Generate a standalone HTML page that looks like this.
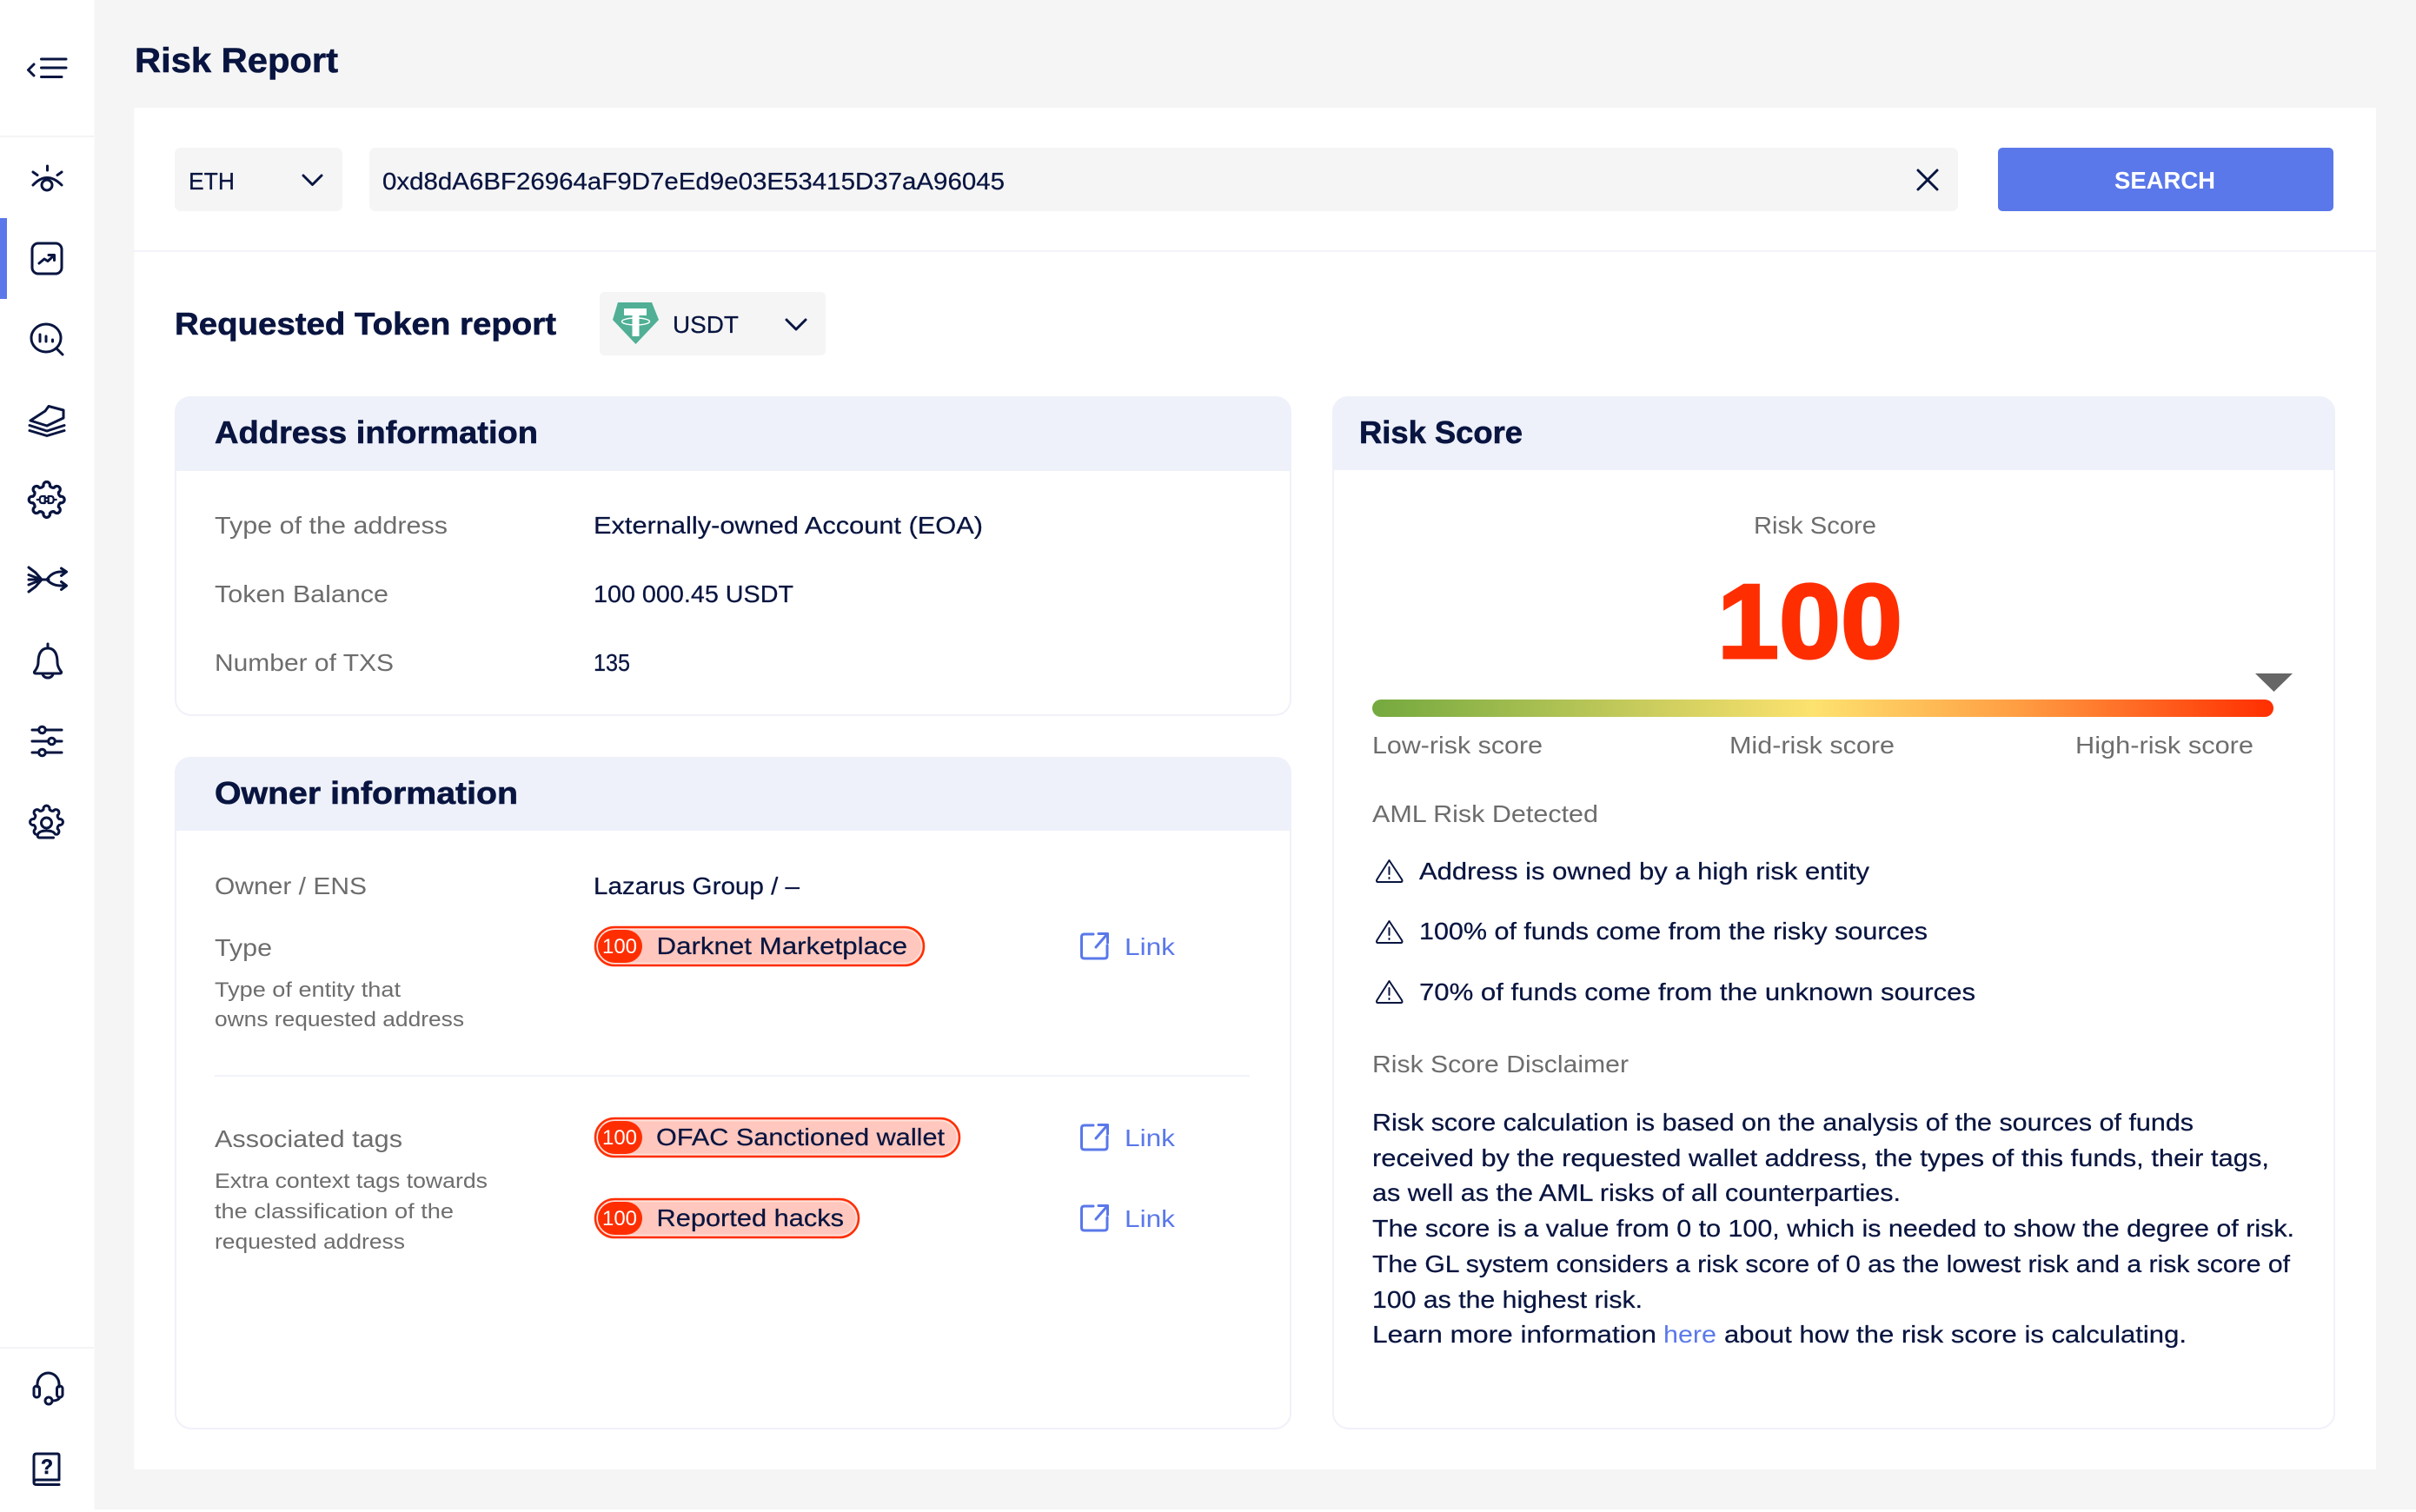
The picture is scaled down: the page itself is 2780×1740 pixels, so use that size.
<!DOCTYPE html>
<html><head><meta charset="utf-8"><title>Risk Report</title>
<style>
html,body{margin:0;padding:0;background:#fff;width:2780px;height:1740px;overflow:hidden}
svg{display:block}
text{font-family:"Liberation Sans",sans-serif;font-size:28px;fill:#091540;stroke:#091540;stroke-width:.25px}
.g{fill:#6d6d6d;stroke:none}
.s{font-size:24px;fill:#6d6d6d;stroke:none}
.b{font-weight:bold;stroke-width:.6px}
.h{font-weight:bold;font-size:36px;stroke-width:.6px}
.l{fill:#5a78ea;stroke:none}
.n{stroke:none}
.i{fill:none;stroke:#091540;stroke-width:3;stroke-linecap:round;stroke-linejoin:round}
.a{fill:none;stroke:#5a78ea;stroke-width:3;stroke-linecap:round;stroke-linejoin:round}
.w{fill:none;stroke:#091540;stroke-width:2;stroke-linecap:round;stroke-linejoin:round}
</style></head><body>
<svg width="2780" height="1740" viewBox="0 0 2780 1740" xmlns="http://www.w3.org/2000/svg">
<defs><linearGradient id="grad" x1="0" x2="1" y1="0" y2="0">
<stop offset="0" stop-color="#74a93f"/><stop offset=".49" stop-color="#fde26f"/><stop offset=".72" stop-color="#ff9c42"/><stop offset="1" stop-color="#ff2e00"/></linearGradient></defs>
<rect width="2780" height="1740" fill="#fff"/>
<rect x="108.500" width="2672" height="1737" fill="#f5f5f5"/>
<rect y="156" width="108" height="2" fill="#f4f4f7"/>
<rect y="1550" width="108" height="2" fill="#f4f4f7"/>
<rect y="251" width="8" height="93" fill="#5a78ea"/>

<!-- sidebar icons -->
<path class="i" stroke-width="3.500" d="M39 74 L32.500 80.500 L39 87 M47.500 68 H76 M47.500 78 H76 M47.500 88.500 H71"/>
<g class="i"><path d="M38 213 Q54 196 71 213"/><circle cx="54" cy="213" r="6"/><path d="M54.500 191 V196 M38 198 L43 201.500 M71 198 L66 201.500"/></g>
<g class="i"><rect x="37" y="280" width="34" height="35" rx="7"/><path d="M45 303 L51 298 L55 300.500 L62 294 M56 293.500 H62.500 V299.500"/></g>
<g class="i"><ellipse cx="53" cy="389" rx="17" ry="16"/><path d="M65 401 L72 408 M46 385 V393 M53 387 V393 M60.500 391 V393"/></g>
<g class="i"><path d="M35 484 L52 473 L56 467.500 L73 472 V481 L54 490 Z M34 489.500 L54 496 L74 489.500 M34 495.500 L54 501.500 L74 495.500"/></g>
<g class="i" transform="translate(53.700 575)"><path transform="scale(1.08)" d="M14.600 -3.400 A3.500 3.500 0 1 1 14.600 3.400 A5 5 0 0 0 12.700 7.900 A3.500 3.500 0 1 1 7.900 12.700 A5 5 0 0 0 3.400 14.600 A3.500 3.500 0 1 1 -3.400 14.600 A5 5 0 0 0 -7.900 12.700 A3.500 3.500 0 1 1 -12.700 7.900 A5 5 0 0 0 -14.600 3.400 A3.500 3.500 0 1 1 -14.600 -3.400 A5 5 0 0 0 -12.700 -7.900 A3.500 3.500 0 1 1 -7.900 -12.700 A5 5 0 0 0 -3.400 -14.600 A3.500 3.500 0 1 1 3.400 -14.600 A5 5 0 0 0 7.900 -12.700 A3.500 3.500 0 1 1 12.700 -7.900 A5 5 0 0 0 14.600 -3.400 Z"/><path stroke-width="2.200" d="M-2 -4 V4 H-5 Q-8 4 -8 0 Q-8 -4 -5 -4 Z M2 -4 V4 H5 Q8 4 8 0 Q8 -4 5 -4 Z M-11 0 H-8 M8 0 H11 M-1 -2 H2 M-1 2 H2"/></g>
<g class="i" stroke-width="3.200"><path d="M33 653 L41 659 L48 667 M33 661.500 L48 667 M33 667 H56 M33 673 L48 667 M33 681 L41 675 L48 667 M54 667 Q60 658 70 658 H75 M54 667 Q60 674 70 674 H75 M70.500 654 L76.500 658 L70.500 662.500 M70.500 669.500 L76.500 674 L70.500 678.500"/></g>
<g class="i"><path d="M55 741 V746 M55 746 C46 746 44 755 44 762 C44 768 41 771 39.500 773 Q39 775 41 775 H69 Q71 775 70.500 773 C69 771 66 768 66 762 C66 755 64 746 55 746 Z M49 775 A6 5 0 0 0 61 775"/></g>
<g class="i"><path d="M37 840 H71 M37 853 H71 M37 866 H71"/><circle cx="48.500" cy="840" r="3.800" fill="#fff"/><circle cx="59.500" cy="853" r="3.800" fill="#fff"/><circle cx="48.500" cy="866" r="3.800" fill="#fff"/></g>
<g class="i" transform="translate(53.500 946)"><path d="M14.600 -3.400 A3.500 3.500 0 1 1 14.600 3.400 A5 5 0 0 0 12.700 7.900 A3.500 3.500 0 1 1 7.900 12.700 A5 5 0 0 0 3.400 14.600 A3.500 3.500 0 1 1 -3.400 14.600 A5 5 0 0 0 -7.900 12.700 A3.500 3.500 0 1 1 -12.700 7.900 A5 5 0 0 0 -14.600 3.400 A3.500 3.500 0 1 1 -14.600 -3.400 A5 5 0 0 0 -12.700 -7.900 A3.500 3.500 0 1 1 -7.900 -12.700 A5 5 0 0 0 -3.400 -14.600 A3.500 3.500 0 1 1 3.400 -14.600 A5 5 0 0 0 7.900 -12.700 A3.500 3.500 0 1 1 12.700 -7.900 A5 5 0 0 0 14.600 -3.400 Z"/><rect x="-11" y="3" width="22" height="20" fill="#fff" stroke="none"/><circle cx="0" cy="1" r="6"/><path d="M8 18 H-8 Q-11 18 -10 14 Q-8 10 0 10 Q8 10 10 14 "/></g>
<g class="i" stroke-width="2.700"><path d="M43 1596 V1593 A12.500 13 0 0 1 68 1593 V1596"/><rect x="39" y="1595" width="6.500" height="13" rx="3"/><rect x="65.500" y="1595" width="6.500" height="13" rx="3"/><circle cx="56" cy="1612" r="4"/><path d="M60 1612 Q67 1612 69 1608"/></g>
<g class="i"><path d="M42 1673 H66 Q68 1673 68 1675 V1703 H42 Q39 1703 39 1706 V1676 Q39 1673 42 1673 Z M39 1706 Q39 1708.500 42 1708.500 H68"/></g>
<text x="47" y="1696" textLength="14" lengthAdjust="spacingAndGlyphs" class="b" style="font-size:24px">?</text>

<text x="155" y="83" textLength="234" lengthAdjust="spacingAndGlyphs" class="b" style="font-size:40px">Risk Report</text>

<!-- main card -->
<rect x="154.500" y="124" width="2579.500" height="1567" fill="#fff"/>
<rect x="154.500" y="288" width="2579.500" height="2" fill="#f2f3fa"/>

<rect x="201" y="170" width="193" height="73" rx="7" fill="#f5f5f5"/>
<text x="217" y="218" textLength="53" lengthAdjust="spacingAndGlyphs">ETH</text>
<path class="i" d="M349 202 L359.500 212.500 L370 202"/>
<rect x="425" y="170" width="1828" height="73" rx="7" fill="#f5f5f5"/>
<text x="440" y="218" textLength="716" lengthAdjust="spacingAndGlyphs">0xd8dA6BF26964aF9D7eEd9e03E53415D37aA96045</text>
<path class="i" d="M2207 196 L2229 218 M2229 196 L2207 218"/>
<rect x="2299" y="170" width="386" height="73" rx="5" fill="#5a78ea"/>
<text x="2433" y="217" textLength="116" lengthAdjust="spacingAndGlyphs" class="b n" style="fill:#fff">SEARCH</text>

<text x="201" y="385" textLength="439" lengthAdjust="spacingAndGlyphs" class="b" style="font-size:36px">Requested Token report</text>
<rect x="690" y="336" width="260" height="73" rx="5" fill="#f5f5f5"/>
<path fill="#50af95" d="M711 348 H750 L758 368 L731.500 396 L705 368 Z"/>
<path fill="#fff" d="M718 355 H744 V363 H735.500 V387 H727.500 V363 H718 Z"/>
<ellipse cx="731.500" cy="370" rx="16" ry="4" fill="none" stroke="#fff" stroke-width="1.500"/>
<text x="774" y="383" textLength="76" lengthAdjust="spacingAndGlyphs">USDT</text>
<path class="i" d="M905 368 L916 379 L927 368"/>

<!-- Address card -->
<rect x="202" y="457" width="1283" height="366" rx="18" fill="#fff" stroke="#f0f1f9" stroke-width="2"/>
<path fill="#eef1f9" d="M219 456 H1468 A18 18 0 0 1 1486 474 V542 H201 V474 A18 18 0 0 1 219 456 Z"/>
<text x="247" y="510" textLength="372" lengthAdjust="spacingAndGlyphs" class="h">Address information</text>
<text x="247" y="614" textLength="268" lengthAdjust="spacingAndGlyphs" class="g">Type of the address</text>
<text x="683" y="614" textLength="448" lengthAdjust="spacingAndGlyphs">Externally-owned Account (EOA)</text>
<text x="247" y="693" textLength="200" lengthAdjust="spacingAndGlyphs" class="g">Token Balance</text>
<text x="683" y="693" textLength="230" lengthAdjust="spacingAndGlyphs">100 000.45 USDT</text>
<text x="247" y="772" textLength="206" lengthAdjust="spacingAndGlyphs" class="g">Number of TXS</text>
<text x="683" y="772" textLength="42" lengthAdjust="spacingAndGlyphs">135</text>

<!-- Owner card -->
<rect x="202" y="872" width="1283" height="772" rx="18" fill="#fff" stroke="#f0f1f9" stroke-width="2"/>
<path fill="#eef1f9" d="M219 871 H1468 A18 18 0 0 1 1486 889 V956 H201 V889 A18 18 0 0 1 219 871 Z"/>
<text x="247" y="925" textLength="349" lengthAdjust="spacingAndGlyphs" class="h">Owner information</text>
<text x="247" y="1029" textLength="175" lengthAdjust="spacingAndGlyphs" class="g">Owner / ENS</text>
<text x="683" y="1029" textLength="237" lengthAdjust="spacingAndGlyphs">Lazarus Group / –</text>
<text x="247" y="1100" textLength="66" lengthAdjust="spacingAndGlyphs" class="g">Type</text>
<text x="247" y="1147" textLength="214" lengthAdjust="spacingAndGlyphs" class="s">Type of entity that</text>
<text x="247" y="1181" textLength="287" lengthAdjust="spacingAndGlyphs" class="s">owns requested address</text>
<rect x="247" y="1237" width="1191" height="2" fill="#f2f3fa"/>
<text x="247" y="1320" textLength="216" lengthAdjust="spacingAndGlyphs" class="g">Associated tags</text>
<text x="247" y="1367" textLength="314" lengthAdjust="spacingAndGlyphs" class="s">Extra context tags towards</text>
<text x="247" y="1402" textLength="275" lengthAdjust="spacingAndGlyphs" class="s">the classification of the</text>
<text x="247" y="1437" textLength="219" lengthAdjust="spacingAndGlyphs" class="s">requested address</text>

<!-- pills -->
<g><rect x="685" y="1067" width="378" height="44" rx="22" fill="#ffc7bd" stroke="#ff2e00" stroke-width="2.500"/><rect x="687.500" y="1069.500" width="373" height="39" rx="19.500" fill="none" stroke="#ffe3dd" stroke-width="1.500"/><rect x="688" y="1070" width="51" height="38" rx="19" fill="#ff2e00"/>
<text x="693" y="1097" textLength="40" lengthAdjust="spacingAndGlyphs" class="n" style="font-size:24px;fill:#fff">100</text>
<text x="755.500" y="1098" textLength="288.500" lengthAdjust="spacingAndGlyphs">Darknet Marketplace</text></g>
<g><rect x="685" y="1287" width="419" height="44" rx="22" fill="#ffc7bd" stroke="#ff2e00" stroke-width="2.500"/><rect x="687.500" y="1289.500" width="414" height="39" rx="19.500" fill="none" stroke="#ffe3dd" stroke-width="1.500"/><rect x="688" y="1290" width="51" height="38" rx="19" fill="#ff2e00"/>
<text x="693" y="1317" textLength="40" lengthAdjust="spacingAndGlyphs" class="n" style="font-size:24px;fill:#fff">100</text>
<text x="755" y="1318" textLength="332" lengthAdjust="spacingAndGlyphs">OFAC Sanctioned wallet</text></g>
<g><rect x="685" y="1380" width="303" height="44" rx="22" fill="#ffc7bd" stroke="#ff2e00" stroke-width="2.500"/><rect x="687.500" y="1382.500" width="298" height="39" rx="19.500" fill="none" stroke="#ffe3dd" stroke-width="1.500"/><rect x="688" y="1383" width="51" height="38" rx="19" fill="#ff2e00"/>
<text x="693" y="1410" textLength="40" lengthAdjust="spacingAndGlyphs" class="n" style="font-size:24px;fill:#fff">100</text>
<text x="755.500" y="1411" textLength="215.500" lengthAdjust="spacingAndGlyphs">Reported hacks</text></g>

<!-- links -->
<path class="a" d="M1258 1075 H1248 Q1244.500 1075 1244.500 1078 V1100 Q1244.500 1103 1248 1103 H1270.500 Q1274 1103 1274 1100 V1088 M1261 1090 L1274 1075 M1264 1074.500 H1274.500 V1085"/>
<text x="1294" y="1099" textLength="58" lengthAdjust="spacingAndGlyphs" class="l">Link</text>
<path class="a" d="M1258 1295 H1248 Q1244.500 1295 1244.500 1298 V1320 Q1244.500 1323 1248 1323 H1270.500 Q1274 1323 1274 1320 V1308 M1261 1310 L1274 1295 M1264 1294.500 H1274.500 V1305"/>
<text x="1294" y="1319" textLength="58" lengthAdjust="spacingAndGlyphs" class="l">Link</text>
<path class="a" d="M1258 1388 H1248 Q1244.500 1388 1244.500 1391 V1413 Q1244.500 1416 1248 1416 H1270.500 Q1274 1416 1274 1413 V1401 M1261 1403 L1274 1388 M1264 1387.500 H1274.500 V1398"/>
<text x="1294" y="1412" textLength="58" lengthAdjust="spacingAndGlyphs" class="l">Link</text>

<!-- Risk card -->
<rect x="1534" y="457" width="1152" height="1187" rx="18" fill="#fff" stroke="#f0f1f9" stroke-width="2"/>
<path fill="#eef1f9" d="M1551 456 H2669 A18 18 0 0 1 2687 474 V541 H1533 V474 A18 18 0 0 1 1551 456 Z"/>
<text x="1564" y="510" textLength="188" lengthAdjust="spacingAndGlyphs" class="h">Risk Score</text>
<text x="2018" y="614" textLength="141" lengthAdjust="spacingAndGlyphs" class="g">Risk Score</text>
<text x="1976" y="757" textLength="213" lengthAdjust="spacingAndGlyphs" class="b" style="font-size:122px;fill:#ff2e00;stroke:#ff2e00;stroke-width:3px">100</text>
<path fill="#666" d="M2595 775 H2638 L2616.500 796 Z"/>
<rect x="1579" y="805" width="1037" height="20" rx="10" fill="url(#grad)"/>
<text x="1579" y="867" textLength="196" lengthAdjust="spacingAndGlyphs" class="g">Low-risk score</text>
<text x="1990" y="867" textLength="190" lengthAdjust="spacingAndGlyphs" class="g">Mid-risk score</text>
<text x="2388" y="867" textLength="205" lengthAdjust="spacingAndGlyphs" class="g">High-risk score</text>
<text x="1579" y="946" textLength="260" lengthAdjust="spacingAndGlyphs" class="g">AML Risk Detected</text>

<g class="w"><path d="M1598.500 990 L1613 1012 Q1614.500 1015 1611.500 1015 H1586 Q1583 1015 1584.500 1012 Z M1598.500 998 V1006 M1598.500 1010 V1011"/></g>
<text x="1633" y="1012" textLength="518" lengthAdjust="spacingAndGlyphs">Address is owned by a high risk entity</text>
<g class="w"><path d="M1598.500 1060 L1613 1082 Q1614.500 1085 1611.500 1085 H1586 Q1583 1085 1584.500 1082 Z M1598.500 1068 V1076 M1598.500 1080 V1081"/></g>
<text x="1633" y="1081" textLength="585" lengthAdjust="spacingAndGlyphs">100% of funds come from the risky sources</text>
<g class="w"><path d="M1598.500 1129 L1613 1151 Q1614.500 1154 1611.500 1154 H1586 Q1583 1154 1584.500 1151 Z M1598.500 1137 V1145 M1598.500 1149 V1150"/></g>
<text x="1633" y="1151" textLength="640" lengthAdjust="spacingAndGlyphs">70% of funds come from the unknown sources</text>

<text x="1579" y="1234" textLength="295" lengthAdjust="spacingAndGlyphs" class="g">Risk Score Disclaimer</text>
<text x="1579" y="1301" textLength="945" lengthAdjust="spacingAndGlyphs">Risk score calculation is based on the analysis of the sources of funds</text>
<text x="1579" y="1342" textLength="1032" lengthAdjust="spacingAndGlyphs">received by the requested wallet address, the types of this funds, their tags,</text>
<text x="1579" y="1382" textLength="608" lengthAdjust="spacingAndGlyphs">as well as the AML risks of all counterparties.</text>
<text x="1579" y="1423" textLength="1061" lengthAdjust="spacingAndGlyphs">The score is a value from 0 to 100, which is needed to show the degree of risk.</text>
<text x="1579" y="1464" textLength="1056" lengthAdjust="spacingAndGlyphs">The GL system considers a risk score of 0 as the lowest risk and a risk score of</text>
<text x="1579" y="1505" textLength="311" lengthAdjust="spacingAndGlyphs">100 as the highest risk.</text>
<text x="1579" y="1545" textLength="327" lengthAdjust="spacingAndGlyphs">Learn more information</text>
<text x="1914" y="1545" textLength="61" lengthAdjust="spacingAndGlyphs" class="l">here</text>
<text x="1984" y="1545" textLength="532" lengthAdjust="spacingAndGlyphs">about how the risk score is calculating.</text>
</svg>
</body></html>
